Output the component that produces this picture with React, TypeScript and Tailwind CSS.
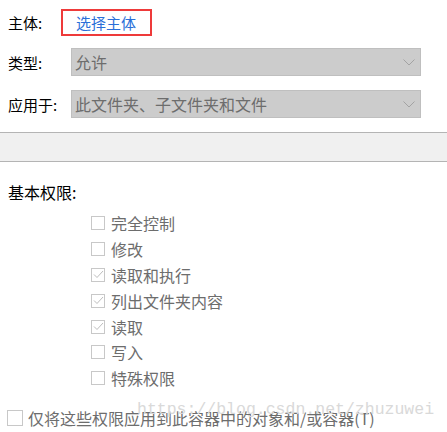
import React from 'react';

const perms = [
  { label: '完全控制', checked: false },
  { label: '修改', checked: false },
  { label: '读取和执行', checked: true },
  { label: '列出文件夹内容', checked: true },
  { label: '读取', checked: true },
  { label: '写入', checked: false },
  { label: '特殊权限', checked: false },
];

function Chevron() {
  return (
    <svg width="12" height="7" viewBox="0 0 12 7" fill="none" stroke="#a3a3a3" strokeWidth="1">
      <path d="M0.5 0.5 L6 6 L11.5 0.5" />
    </svg>
  );
}

function Check() {
  return (
    <svg width="11" height="9" viewBox="0 0 11 9" fill="none" stroke="#bdbdbd" strokeWidth="1">
      <path d="M1 4.5 L4 7.5 L10 1" />
    </svg>
  );
}

function Box({ checked, size = 'w-[14px] h-[14px]' }: { checked?: boolean; size?: string }) {
  return (
    <span className={`${size} border border-[#c8c8c8] bg-white flex items-center justify-center shrink-0`}>
      {checked && <Check />}
    </span>
  );
}

function Select({ value }: { value: string }) {
  return (
    <div className="ml-[71px] w-[350px] h-[28px] bg-[#cccccc] border border-[#bfbfbf] flex items-center justify-between pl-[3px] pr-[5px]">
      <span className="text-[16px] leading-none text-[#6d6d6d]">{value}</span>
      <Chevron />
    </div>
  );
}

export default function App() {
  return (
    <div
      className="relative w-[447px] h-[432px] bg-white overflow-hidden text-black"
      style={{ fontFamily: '"Noto Sans CJK SC", "Microsoft YaHei", sans-serif' }}
    >
      {/* subject */}
      <div className="flex items-center h-[27px] mt-[9px]">
        <span className="w-[61px] pl-[8px] text-[15px] leading-none">主体:</span>
        <div className="w-[91px] h-[27px] border-2 border-[#ee3a3a] flex items-center pl-[13px]">
          <span className="text-[15px] leading-none text-[#2a6fd8]">选择主体</span>
        </div>
      </div>

      {/* type */}
      <div className="flex items-center h-[28px] mt-[12px]">
        <span className="absolute left-[8px] text-[15px] leading-none">类型:</span>
        <Select value="允许" />
      </div>

      {/* applies to */}
      <div className="flex items-center h-[28px] mt-[14px]">
        <span className="absolute left-[8px] text-[15px] leading-none">应用于:</span>
        <Select value="此文件夹、子文件夹和文件" />
      </div>

      {/* band */}
      <div className="mt-[14px] h-[30px] bg-[#f0f0f0] border-y border-[#b4b4b4]" />

      <div className="mt-[21px] pl-[8px] text-[16px] leading-[18px]">基本权限:</div>

      <div className="mt-[9px] flex flex-col">
        {perms.map((p) => (
          <div key={p.label} className="h-[25.9px] flex items-center pl-[91px] gap-[6px]">
            <Box checked={p.checked} />
            <span className="text-[16px] leading-none text-[#6d6d6d]">{p.label}</span>
          </div>
        ))}
      </div>

      <div className="mt-[19px] flex items-center pl-[7px] gap-[5px]">
        <Box size="w-[16px] h-[16px]" />
        <span className="text-[16px] leading-none text-[#6d6d6d]">仅将这些权限应用到此容器中的对象和/或容器(T)</span>
      </div>

      {/* watermark */}
      <div
        className="absolute left-[137px] top-[400px] text-[16.5px] leading-[20px] text-[#d9d9d9] pointer-events-none"
        style={{ fontFamily: '"Liberation Mono", monospace' }}
      >
        https://blog.csdn.net/zhuzuwei
      </div>
    </div>
  );
}
